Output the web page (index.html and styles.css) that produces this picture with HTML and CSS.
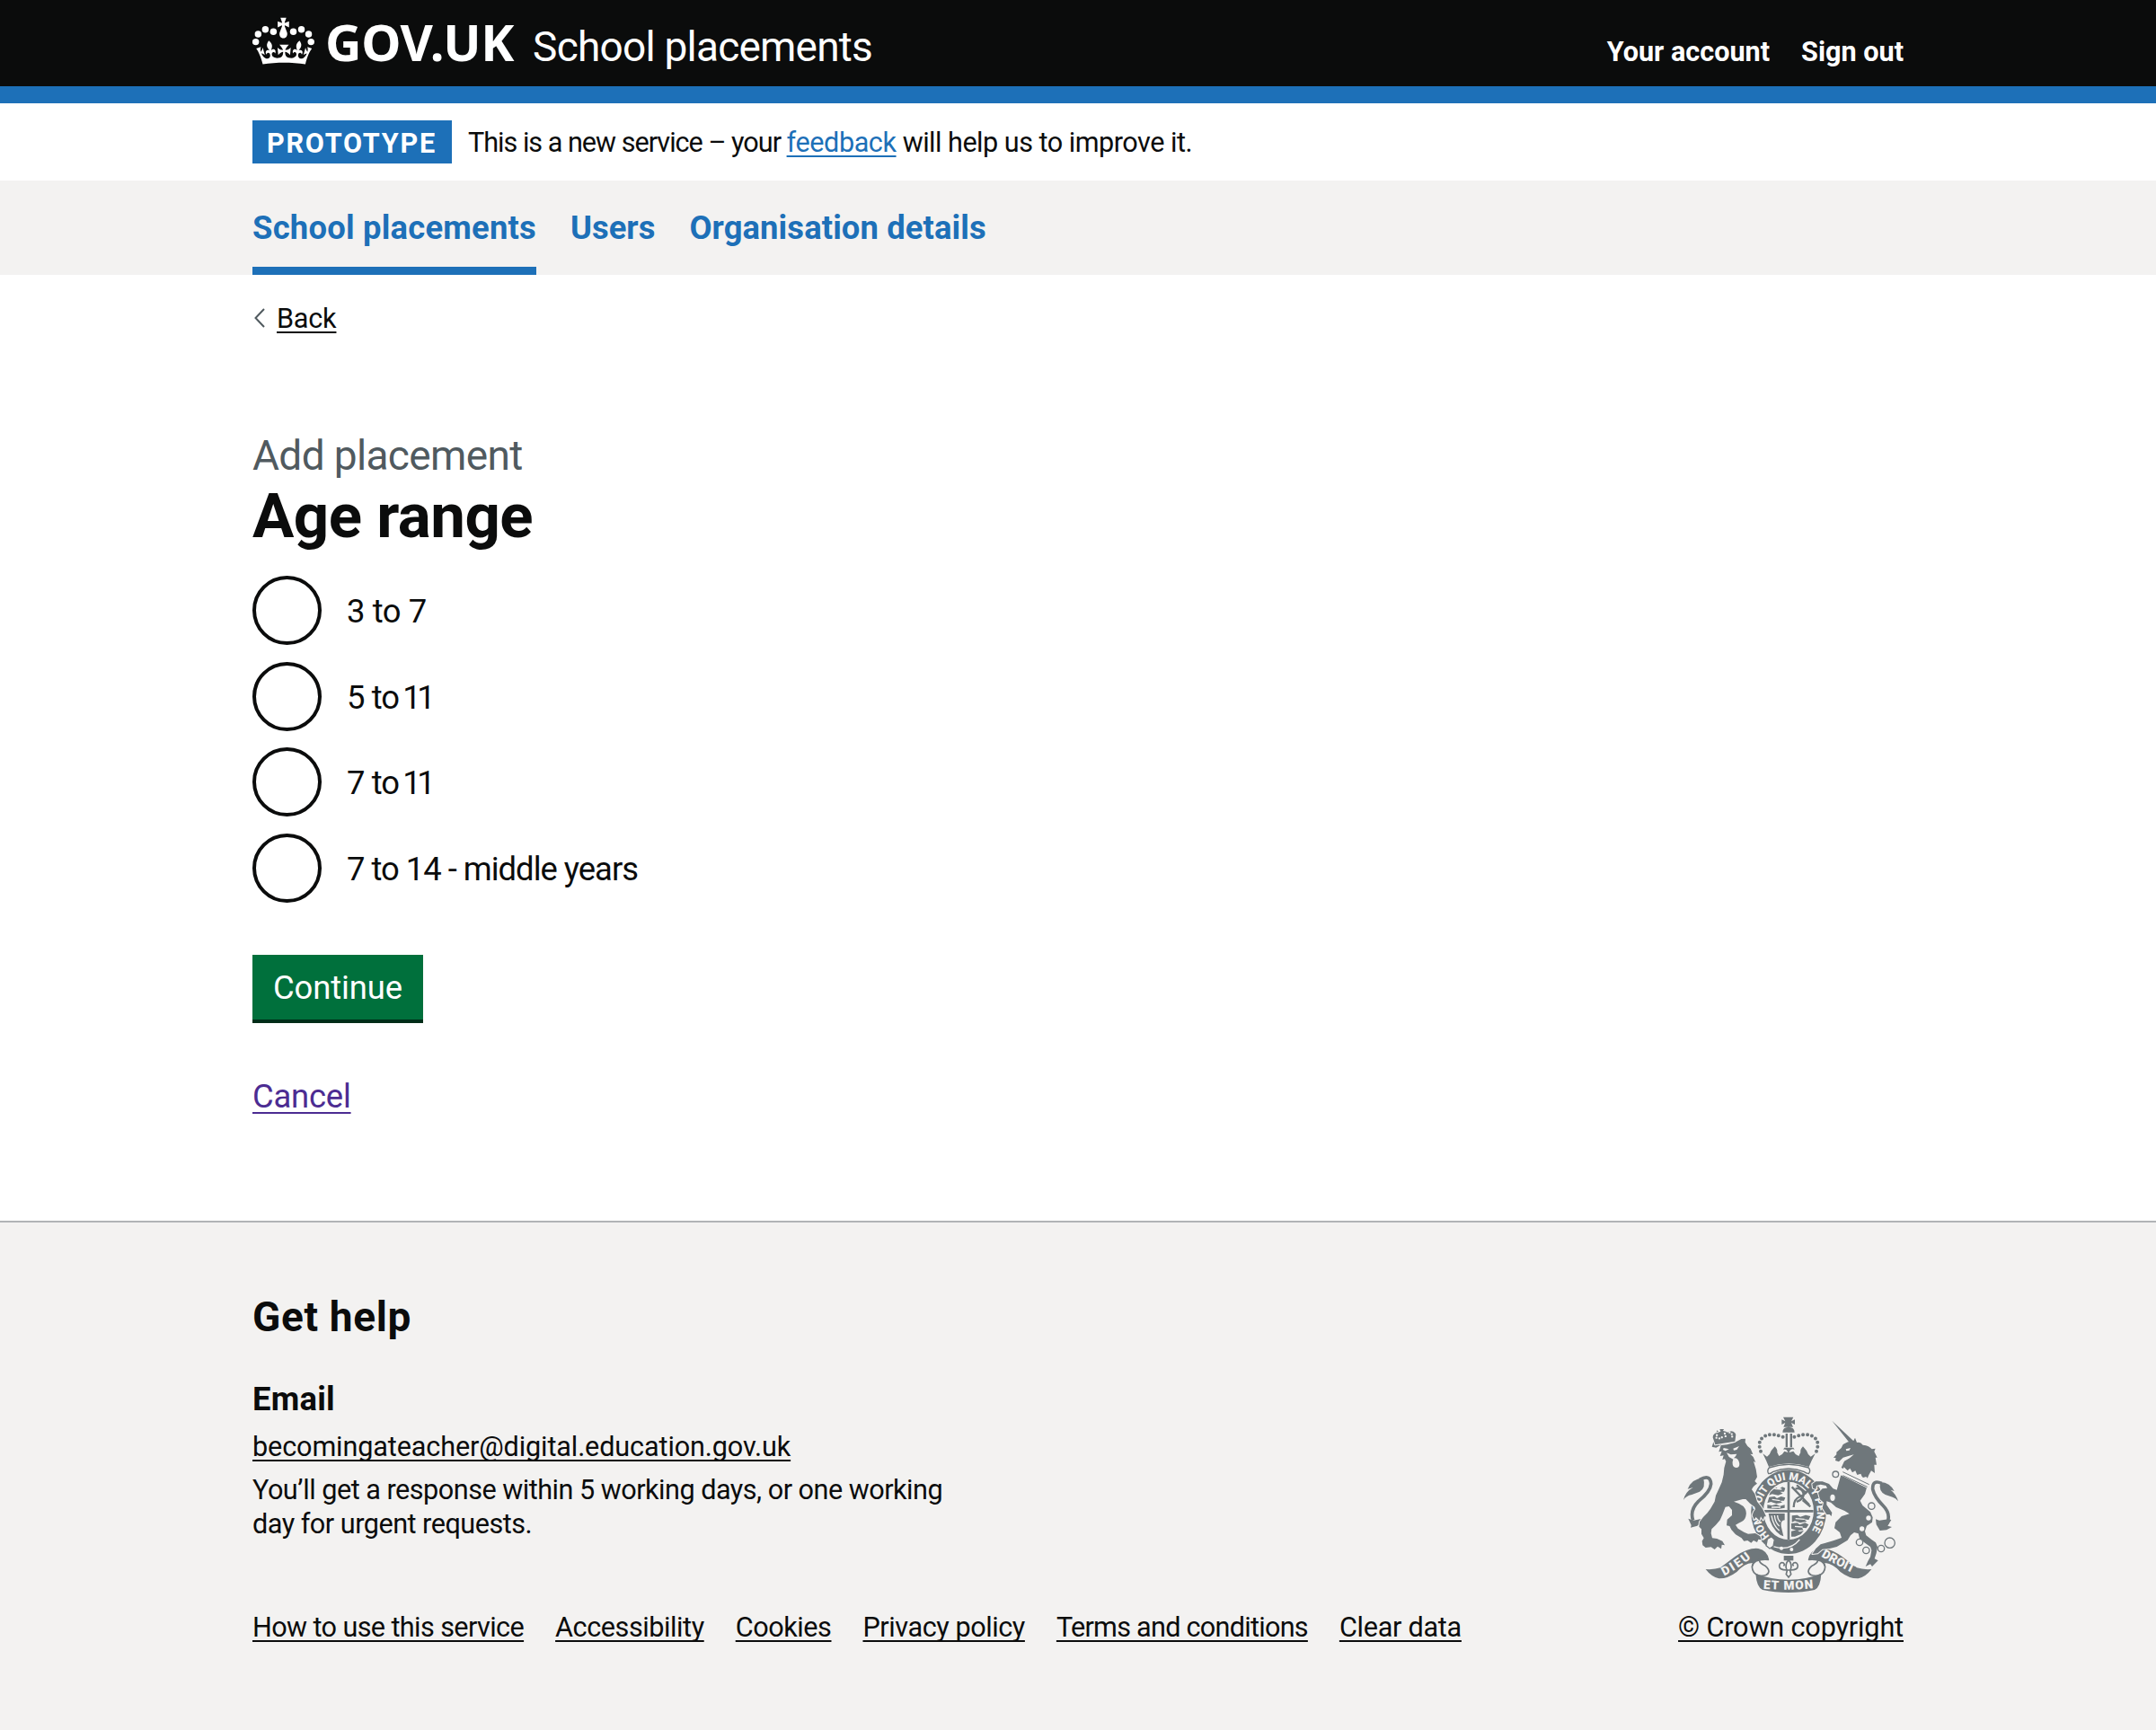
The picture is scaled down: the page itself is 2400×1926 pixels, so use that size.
FILE: index.html
```html
<!DOCTYPE html>
<html lang="en">
<head>
<meta charset="utf-8">
<title>Age range - School placements - GOV.UK</title>
<link rel="stylesheet" href="styles.css">
</head>
<body>
<header class="header">
  <div class="container header-inner">
    <svg class="crown" viewBox="0 0 36 32" aria-hidden="true">
      <g fill="currentColor">
        <circle cx="7.500" cy="10.900" r="1.950"/><circle cx="3.300" cy="13.600" r="1.950"/><circle cx="1.900" cy="18.100" r="1.950"/><circle cx="12.200" cy="12.200" r="1.950"/>
        <circle cx="28.500" cy="10.900" r="1.950"/><circle cx="32.700" cy="13.600" r="1.950"/><circle cx="34.100" cy="18.100" r="1.950"/><circle cx="23.800" cy="12.200" r="1.950"/>
        <path d="M18.900 8.500l2.400 1.200V6.200l-2.400.8-.2-.1 1-2.800h-3.400l1 2.800-.2.100-2.400-.8v3.500l2.400-1.200.2.200-1.500 4.100c-.3 1.700.5 3.200 2.200 3.200s2.500-1.500 2.200-3.200l-1.500-4.100z"/>
        <path d="M18 30.200c4.600 0 8.900.3 12.800.9 1.100-4.600 2.400-7.200 3.800-9.100l-2.600-.9c.3 1.300.3 1.900 0 2.800-.4-.4-.8-1.200-1.100-2.400l-1.200 4.200c.8-.5 1.300-.9 2-.9-1.200 2.600-2.700 3.200-3.600 3-1.200-.2-1.700-1.300-1.500-2.200.3-1.300 1.600-1.600 2.200-.1 1.200-2.400-.8-3.100-2-2.400 1.900-1.900 2.200-3.600.6-5.700-2.200 1.700-2.200 3.300-1.300 5.700-1.200-1.400-3.200-.6-2.500 1.700.9-1.400 2.200-.5 2 .8-.2 1.200-1.800 2.100-3.700 1.900-2.700-.2-2.900-2.100-2.900-3.600.7-.1 1.900.5 2.900 1.900l.4-4.300c-1.100 1.100-2.100 1.400-3.200 1.400.4-1.200 2.100-3.100 2.100-3.100h-5.500s1.700 1.900 2.100 3.100c-1.100 0-2.100-.3-3.200-1.400l.4 4.300c1-1.400 2.200-2 2.900-1.900-.1 1.500-.2 3.400-2.900 3.600-1.900.2-3.500-.8-3.700-1.900-.2-1.300 1-2.300 2-.8.7-2.300-1.300-3.100-2.500-1.700 1-2.300.9-4-1.300-5.700-1.600 2.100-1.400 3.800.6 5.700-1.200-.7-3.200 0-2 2.400.6-1.500 1.900-1.200 2.200.1.200 1-.3 2-1.500 2.200-.9.200-2.400-.5-3.600-3 .7 0 1.300.3 2 .9l-1.200-4.200c-.3 1.200-.7 1.900-1.100 2.400-.3-.9-.3-1.500 0-2.800l-2.700.9c1.400 2 2.600 4.600 3.800 9.100 3.900-.6 8.200-.9 12.800-.9"/>
      </g>
    </svg>
    <span class="logo">GOV.UK</span>
    <span class="service">School placements</span>
    <nav class="account"><a>Your account</a><a>Sign out</a></nav>
  </div>
</header>
<div class="container phase">
  <strong class="tag">PROTOTYPE</strong>
  <p class="phase-text">This is a new service – your <a>feedback</a><span class="phase-end"> will help us to improve it.</span></p>
</div>
<nav class="nav">
  <div class="container nav-list">
    <a class="nav-item current">School placements</a>
    <a class="nav-item users">Users</a>
    <a class="nav-item">Organisation details</a>
  </div>
</nav>
<main class="container main">
  <div class="back">
    <svg class="chevron" viewBox="0 0 14 22" aria-hidden="true"><path d="M13 1L3.500 11l9.500 10" fill="none" stroke="#505a5f" stroke-width="2"/></svg>
    <a>Back</a>
  </div>
  <span class="caption">Add placement</span>
  <h1 class="title">Age range</h1>
  <div class="radios">
    <label class="radio"><span class="dot"></span><span class="radio-label">3 to 7</span></label>
    <label class="radio"><span class="dot"></span><span class="radio-label tight">5 to <span class="narrow">11</span></span></label>
    <label class="radio"><span class="dot"></span><span class="radio-label tight">7 to <span class="narrow">11</span></span></label>
    <label class="radio"><span class="dot"></span><span class="radio-label long">7 to 14 - middle years</span></label>
  </div>
  <button class="button">Continue</button>
  <p class="cancel"><a>Cancel</a></p>
</main>
<footer class="footer">
  <div class="container footer-inner">
    <div class="support">
      <h2 class="help">Get help</h2>
      <h3 class="email">Email</h3>
      <p class="address"><a>becomingateacher@digital.education.gov.uk</a></p>
      <p class="response">You’ll get a response within 5 working days, or one working<br>day for urgent requests.</p>
      <div class="links">
        <a class="l-how">How to use this service</a><a>Accessibility</a><a>Cookies</a><a>Privacy policy</a><a class="l-terms">Terms and conditions</a><a class="l-clear">Clear data</a>
      </div>
    </div>
    <div class="copyright">
      <svg class="arms" viewBox="39 18 723 594" aria-hidden="true">
        <defs>
          <path id="motto" d="M330 420A95 107 0 1 1 456 420"/>
          <path id="dieu" d="M178 553Q225 530 277 486"/>
          <path id="etmon" d="M308 596Q393 603 480 594"/>
          <path id="droit" d="M501 488Q550 516 612 546"/>
          <g id="fold">
            <path d="M116 531Q145 533 165 526L215 488Q260 458 292 462Q322 468 328 500Q312 494 290 502Q278 508 272 520L272 510Q245 512 220 540Q190 563 160 562Q135 556 116 531z"/>
            <path class="curl" d="M327 499Q275 495 271 523Q272 545 292 552Q325 556 327 538Q325 524 308 516Q294 508 296 500"/>
          </g>
        </defs>
        <g class="ink">
          <!-- royal crown -->
          <path d="M375 23h34l-7 14 12-6v17l-12-6 6 14h-32l6-14-12 6V31l12 6zM373 74q0-18 20-18t20 18z"/>
          <path d="M327 189q-7-18-20-44l14 10q10-6 14-20l12-14q10 10 8 20l6 12q12-4 18-16l12 4q-4-12-16-10l4-6h30l4 6q-14-4-18 10l14-4q6 12 18 16l6-12q-2-10 8-20l12 14q4 14 14 20l15-10q-13 24-21 44-67-22-134 0z"/>
          <path d="M383 78h7v46h-7zM398 78h7v46h-7z"/>
          <!-- garter -->
          <path fill-rule="evenodd" d="M393 199A125 140 0 1 0 393 480A125 140 0 1 0 393 199zM393 239A84 97 0 0 1 393 433A84 97 0 0 1 393 239z"/>
          <!-- motto ribbons -->
          <use href="#fold"/>
          <use href="#fold" transform="matrix(-1 0 0 1 786 0)"/>
          <path d="M283 545Q330 565 393 566Q456 565 502 545Q500 590 480 600Q440 609 393 609Q346 609 306 600Q286 590 283 545z"/>
        </g>
        <path class="belt" d="M328 192q65-22 132 0 8 10 0 20-10-2-14-6-53-22-106 0-6 6-14 6-6-10 2-20z"/>
        <!-- quarters of the shield -->
        <g class="ink">
          <path d="M389 240h8v192h-8zM311 333h165v8H311z"/>
          <path d="M326 345h54v22q-14 0-12 20l8 34-10-4q-34-24-40-72z"/>
          <path d="M340 266l12-8 8 6 12-8 10 4-4 12-14 0 10 6-16 6-20-4-10 4 4-10zM328 290l18-2 8 6 14-6 14 4-4 10-14 0 8 6-20 4-18-6-12 4zM322 316l16 2 14-4 12 6 16-4v10l-22 4-36-2zM404 352l18-2 10 6 18-6 16 4-6 12-16-2 10 8-22 4-18-6-10 4zM402 378l20-2 8 6 18-6 12 6-8 12-14-2 4 8-20 2-20-6zM402 404l18-4 10 6 14-4-10 12-20 8h-12z"/>
        </g>
        <path class="ink-line" d="M404 256l58 60M410 324q0-28 22-36t26-26M416 262q20-4 26 14t-22 30M440 300l26 22M420 250l34 28"/>
        <path class="paper-line" d="M336 352q6 34 26 50M346 351q2 24 16 36M356 351q0 14 10 22M346 262l24 2M338 298l26 4M336 324l30 0M416 362l30 2M414 388l26 2M318 444q70 38 112 -12"/>
        <g class="motto">
          <text class="garter"><textPath href="#motto" textLength="470" lengthAdjust="spacingAndGlyphs">HONI SOIT QUI MAL Y PENSE</textPath></text>
          <text><textPath href="#dieu" textLength="108">DIEU</textPath></text>
          <text><textPath href="#etmon" textLength="168">ET MON</textPath></text>
          <text><textPath href="#droit" textLength="120">DROIT</textPath></text>
        </g>
        <!-- tails -->
        <g class="ink">
          <path d="M42 300q6-28 32-42l-18 5q14-34 52-37 10 34-12 46l-26 10q-20 4-28 18z"/>
          <path d="M759 304q-7-24-25-38l12 4q-14-28-46-30-8 30 16 42l24 8q12 4 19 14z"/>
          <path d="M58 362l18 6 28-6 44-28-2 18-38 18-20 16-22 6 2-8zM736 366l-10-2-30 4-12-4 2 18 12 20 22-2 18-10-14-4z"/>
        </g>
        <path class="tail" d="M96 232Q132 212 134 246Q132 272 92 304Q62 334 74 368M704 244Q672 230 674 264Q680 290 708 318Q736 346 722 378"/>
        <g class="ink supporters">
          <!-- lion -->
          <path d="M137 122l14 3 14-8 22-2 26-7 22-12 14-1-1 12 8 13 10 8 8 19-9-1 10 10 8 18-7-3 8 26 4 26-8 14 8 8q-14 8-18 20l10 14 8 26 14 18 6 10 10 22-6 0-4 12-8-12-4 14-12-12-6 8-6-14 4-12 6-8-2-8-16-12-14-14-10 0-30 8q20 6 32 16 14 16 8 34-4 16-24 22l-10 6 8 12 20 12 14 6 24-2 16 10 4 12-10-2-4 10-12-6-8 8-12-8-12 2-8-10-20-12-14-16-6-12-10-2 2-20 16-14 0-18-10-12-12 2-10 26-8 18-14 16-14 14-2 14 4 16 16 2 18 8 8 14-10-2-2 14-12-8-10 10-12-8-18 2-10-8-2-14 6-10-8-14 0-16-8-8 2-16 12-16 14-14 10-14 14-24 4-20 10-22 10-22 6-26 2-22 6-22-4-8-8 2 4-14-12 2 6-16-10 2 8-24-8 2 6-24-8 0 8-16-12-10z"/>
          <path d="M148 115l-8-24q0-14 16-16l10-4-3-8h14l-3 6 10 2 4 3q16-10 26 2 6 6 2 14l-2 14z"/>
          <!-- unicorn -->
          <path d="M538 35l72 68-10 10zM596 104l14-2 5-10 6 16q12-4 20 8 22 2 30 14l12-2-4 10 10 20-6 0 4 24-8 0 2 28-12-8-8 14-6 14-86-38 10-22 18-10 14-12-16 4-20 6-14 14-12-4 2-8-8-2 10-10 0-8 16-14 6-12 16-8z"/>
          <path d="M568 216l86 42-6 22-16 22 8 16 26 22 8 18-2 16-18 12-6 18 4 14 18 14 14 10 6 14-4 22-6 18 12 6-20 20-6-8-16 8 8-18 8-14 4-22-4-12-20-14-16-14-4-16-14-4-12 10-10 16-36 22-24 6-24 2-16 14-18 2 12-18 16-14 42-12 28-10-6-18-18-14 4-20 20-20 26-8-16-10-28-12-18-16-14-4 0 12 18 26-2 12-6-6-10 0-8-12-6-10 4-18-12-10-6-22 14-14 16-2-4-8-18-4-14 4-2 12-10-4-2-14 12-8 22 0 22 8 14 16 12 4z"/>
        </g>
        <g class="ink">
          <path d="M377 486h32v16h-32z"/>
          <path class="lily" d="M393 500q-14 16-6 34h12q8-18-6-34zM386 534q-24 0-24-14 2-14 14-10 6 6 0 10M400 534q24 0 24-14-2-14-14-10-6 6 0 10M380 534h26M388 536l-3 12 8 10 8-10-3-12"/>
        </g>
        <g class="paper">
          <path d="M176 126l18 4-12 6-8-4zM208 128l20-8-8 12-10 2zM186 142l14 6 20-2-4 8-6 6q14-2 18 14 4 16-10 18-14-2-12-20l2-8-14-8zM584 130l16-4-4 8-10 2z"/>
          <path d="M578 190l12 12 8-8 8 14 10-6 6 14 12-4 6 14 12-4 12 14-8 24-90-44z"/>
          <circle cx="369" cy="461" r="6"/><circle cx="403" cy="465" r="6"/><circle cx="660" cy="360" r="8"/><circle cx="638" cy="396" r="8"/>
        </g>
        <g class="dots">
          <path class="dots-lion" d="M152 92Q150 82 160 80M180 78L184 92M196 74Q208 80 204 90M162 94L172 90"/>
          <path d="M300 137Q288 105 308 90T360 85T376 94M486 137Q498 105 478 90T426 85T410 94"/>
        </g>
        <path class="chain" d="M574 206L662 248M574 218L656 256"/>
        <g class="rings">
          <circle cx="550" cy="214" r="10"/><ellipse cx="540" cy="292" rx="10" ry="13"/><circle cx="630" cy="441" r="11"/><circle cx="652" cy="468" r="11"/><circle cx="702" cy="462" r="11"/><circle cx="731" cy="443" r="17"/><circle cx="670" cy="320" r="11"/>
          <path d="M322 430l14-8 10 10-4 22-12 8-12-10z"/>
        </g>
      </svg>
      <a>© Crown copyright</a>
    </div>
  </div>
</footer>
</body>
</html>
```
FILE: styles.css
```css
* { box-sizing: border-box; }
body { margin: 0; font-family: Roboto, "Liberation Sans", sans-serif; font-size: 30.6px; line-height: 38px; letter-spacing: -0.5px; color: #0b0c0c; background: #fff; }
h1, h2, h3, p { margin: 0; }
a { text-decoration: underline; text-decoration-thickness: 2px; text-underline-offset: 4px; text-decoration-skip-ink: none; }
.container { width: 1838px; margin: 0 auto; }

.header { height: 115px; background: #0b0c0c; border-bottom: 19px solid #1d70b8; color: #fff; }
.header-inner { display: flex; align-items: baseline; padding-top: 8px; }
.crown { width: 68.9px; height: 61.2px; align-self: flex-start; margin-top: 4px; }
.logo { margin-left: 12px; font-family: "Noto Sans", sans-serif; font-size: 56px; font-weight: 700; line-height: 76px; letter-spacing: -0.3px; }
.service { margin-left: 21px; font-size: 46px; letter-spacing: -0.78px; }
.account { display: flex; gap: 35px; margin-left: auto; font-weight: 700; letter-spacing: 0; }
.account a { text-decoration: none; }

.phase { display: flex; padding: 19px 0; height: 86px; }
.tag { width: 222px; height: 48px; padding: 3px 0 1px 16px; background: #1d70b8; color: #fff; line-height: 45px; letter-spacing: 1.76px; }
.phase-text { margin: 6px 0 0 18px; letter-spacing: -1px; white-space: pre; }
.phase-text a { color: #1d70b8; letter-spacing: -0.42px; }
.phase-end { letter-spacing: -0.5px; }

.nav { background: #f3f2f1; height: 105px; }
.nav-list { display: flex; gap: 38px; }
.nav-item { padding: 29px 0 19px; border-bottom: 9px solid transparent; line-height: 48px; font-size: 36.4px; font-weight: 700; letter-spacing: 0.1px; color: #1d70b8; text-decoration: none; }
.current { border-color: #1d70b8; letter-spacing: 0.22px; }
.users { letter-spacing: 0; }

.main { padding-top: 30px; height: 1053px; }
.back { display: flex; align-items: center; gap: 13px; height: 38px; letter-spacing: -0.2px; }
.chevron { width: 14px; height: 22px; margin-bottom: 2px; }
.caption { display: block; margin-top: 104px; font-size: 46px; line-height: 58px; letter-spacing: -0.65px; color: #505a5f; }
.title { margin-top: 1px; font-size: 69px; line-height: 76px; letter-spacing: -0.5px; }
.radios { display: flex; flex-direction: column; gap: 18.7px; margin-top: 28px; }
.radio { display: flex; height: 77px; }
.dot { width: 77px; height: 77px; border: 4px solid #0b0c0c; border-radius: 50%; }
.radio-label { margin-left: 28px; font-size: 36.4px; line-height: 80px; letter-spacing: -0.4px; }
.tight { letter-spacing: -0.9px; }
.narrow { letter-spacing: -4.5px; margin-left: -4px; }
.long { letter-spacing: -1px; }
.button { display: block; width: 190px; height: 72px; margin: 58px 0 0; padding: 2px 0 0; border: 0; background: #00703c; box-shadow: 0 4px 0 #002d18; color: #fff; font: 36.4px/70px Roboto, sans-serif; letter-spacing: -0.09px; }
.cancel { margin-top: 62px; font-size: 36.4px; line-height: 48px; letter-spacing: -0.2px; color: #4c2c92; }
.cancel a { text-underline-offset: 5px; }

.footer { height: 567px; border-top: 2px solid #b1b4b6; background: #f3f2f1; }
.footer-inner { display: flex; justify-content: space-between; align-items: flex-end; padding-top: 76px; }
.help { font-size: 46px; line-height: 58px; letter-spacing: 0.64px; }
.email { margin-top: 39px; font-size: 36.4px; line-height: 48px; letter-spacing: 0.25px; }
.address { margin-top: 10px; letter-spacing: -0.12px; }
.response { margin-top: 10px; }
.links { display: flex; gap: 35px; margin-top: 77px; letter-spacing: -0.43px; }
.l-how { letter-spacing: -0.6px; }
.l-terms { letter-spacing: -0.73px; }
.l-clear { letter-spacing: -0.27px; }
.copyright { display: flex; flex-direction: column; align-items: flex-end; gap: 19px; letter-spacing: -0.14px; }

.arms { width: 241px; height: 198px; margin-right: 5px; }
.ink { fill: #6f777b; }
.ink-line { fill: none; stroke: #6f777b; stroke-width: 7; }
.supporters { stroke: #f3f2f1; stroke-width: 6; paint-order: stroke; stroke-linejoin: round; }
.curl, .lily { fill: #f3f2f1; stroke: #6f777b; stroke-width: 5; }
.tail { fill: none; stroke: #6f777b; stroke-width: 11; }
.paper, .belt { fill: #f3f2f1; }
.belt { stroke: #6f777b; stroke-width: 4; }
.paper-line { fill: none; stroke: #f3f2f1; stroke-width: 4; }
.dots { fill: none; stroke: #6f777b; stroke-width: 12; stroke-linecap: round; stroke-dasharray: 0 15; }
.dots-lion { stroke: #f3f2f1; stroke-width: 7; stroke-dasharray: 0 9; }
.chain { fill: none; stroke: #6f777b; stroke-width: 3; }
.rings { fill: #f3f2f1; stroke: #6f777b; stroke-width: 4; }
.motto { fill: #f3f2f1; font: 900 41px Roboto, sans-serif; letter-spacing: 0; }
.garter { font-size: 36px; }
```
